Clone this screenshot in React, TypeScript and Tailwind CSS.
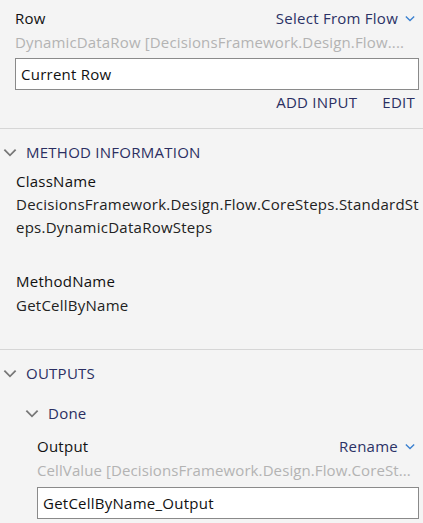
const font = { fontFamily: "'Open Sans', Lato, sans-serif" };

function Chevron({ className }: { className: string }) {
  return (
    <svg viewBox="0 0 12 8" className={className} fill="none" stroke="currentColor" strokeWidth="1.6">
      <path d="M1 1.5 L6 6.5 L11 1.5" />
    </svg>
  );
}

function FieldHeader({ label, action }: { label: string; action: string }) {
  return (
    <div className="flex items-center justify-between h-[22px]">
      <span className="text-[#111]">{label}</span>
      <span className="flex items-center gap-[7px] text-[#2b3266]">
        {action}
        <Chevron className="w-[10px] h-[7px] text-[#3a80d0]" />
      </span>
    </div>
  );
}

function SectionHeader({ title }: { title: string }) {
  return (
    <div className="flex items-center h-[36px] mt-[5px] pl-[3px]">
      <Chevron className="w-[14px] h-[9px] text-[#777]" />
      <span className="ml-[9px] text-[#2b2f62]">{title}</span>
    </div>
  );
}

export default function App() {
  return (
    <div
      className="w-[423px] h-[523px] bg-[#f4f4f4] overflow-hidden text-[15px] tracking-[0.25px]"
      style={font}
    >
      {/* Row input */}
      <div className="pl-[15px] pr-[8px] pt-[7px] pb-[14px] border-b border-[#d6d6d6]">
        <FieldHeader label="Row" action="Select From Flow" />
        <div className="text-[#b3b3b3] h-[26px] leading-[26px] whitespace-nowrap tracking-[0.15px]">
          DynamicDataRow [DecisionsFramework.Design.Flow....
        </div>
        <div className="mt-[3px] mr-[-4px] h-[32px] bg-white border border-[#8a8a8a] flex items-center px-[5px] text-[#111]">
          Current Row
        </div>
        <div className="flex justify-end gap-[25px] h-[24px] items-center text-[#2b2f62]">
          <span>ADD INPUT</span>
          <span>EDIT</span>
        </div>
      </div>

      {/* Method information */}
      <div className="border-b border-[#d6d6d6] pb-[32px]">
        <SectionHeader title="METHOD INFORMATION" />
        <div className="pl-[16px] pr-[4px]">
          <div className="text-[#111] leading-[23px]">ClassName</div>
          <div className="text-[#222] leading-[23px] break-all">
            DecisionsFramework.Design.Flow.CoreSteps.StandardSteps.DynamicDataRowSteps
          </div>
          <div className="text-[#111] leading-[23px] mt-[31px]">MethodName</div>
          <div className="text-[#222] leading-[24px]">GetCellByName</div>
        </div>
      </div>

      {/* Outputs */}
      <SectionHeader title="OUTPUTS" />
      <div className="pl-[25px] flex items-center h-[44px]">
        <Chevron className="w-[14px] h-[9px] text-[#777]" />
        <span className="ml-[9px] text-[#2b2f62]">Done</span>
      </div>
      <div className="pl-[37px] pr-[8px]">
        <FieldHeader label="Output" action="Rename" />
        <div className="text-[#b3b3b3] h-[26px] leading-[26px] whitespace-nowrap tracking-[0.1px]">
          CellValue [DecisionsFramework.Design.Flow.CoreSt...
        </div>
        <div className="mt-[4px] mr-[-4px] h-[32px] bg-white border border-[#8a8a8a] flex items-center px-[5px] text-[#111]">
          GetCellByName_Output
        </div>
      </div>
    </div>
  );
}
